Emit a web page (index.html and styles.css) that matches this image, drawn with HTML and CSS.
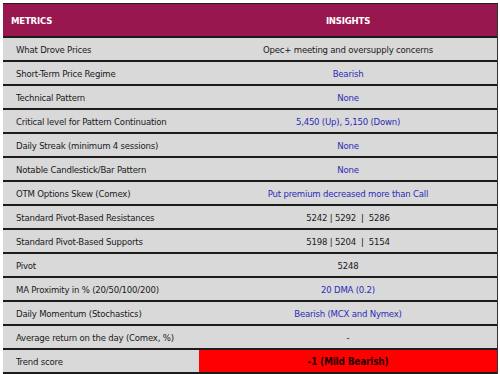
FILE: index.html
```html
<!DOCTYPE html>
<html>
<head>
<meta charset="utf-8">
<link rel="stylesheet" href="styles.css">
</head>
<body>
<div class="sheet">
  <div class="row head">
    <div class="c1">METRICS</div>
    <div class="c2">INSIGHTS</div>
  </div>
  <div class="row"><div class="c1">What Drove Prices</div><div class="c2">Opec+ meeting and oversupply concerns</div></div>
  <div class="row"><div class="c1">Short-Term Price Regime</div><div class="c2 blue">Bearish</div></div>
  <div class="row"><div class="c1">Technical Pattern</div><div class="c2 blue">None</div></div>
  <div class="row"><div class="c1">Critical level for Pattern Continuation</div><div class="c2 blue">5,450 (Up), 5,150 (Down)</div></div>
  <div class="row"><div class="c1">Daily Streak (minimum 4 sessions)</div><div class="c2 blue">None</div></div>
  <div class="row"><div class="c1">Notable Candlestick/Bar Pattern</div><div class="c2 blue">None</div></div>
  <div class="row"><div class="c1">OTM Options Skew (Comex)</div><div class="c2 blue">Put premium decreased more than Call</div></div>
  <div class="row"><div class="c1">Standard Pivot-Based Resistances</div><div class="c2">5242 | 5292 &nbsp;| &nbsp;5286</div></div>
  <div class="row"><div class="c1">Standard Pivot-Based Supports</div><div class="c2">5198 | 5204 &nbsp;| &nbsp;5154</div></div>
  <div class="row"><div class="c1">Pivot</div><div class="c2">5248</div></div>
  <div class="row"><div class="c1">MA Proximity in % (20/50/100/200)</div><div class="c2 blue">20 DMA (0.2)</div></div>
  <div class="row"><div class="c1">Daily Momentum (Stochastics)</div><div class="c2 blue">Bearish (MCX and Nymex)</div></div>
  <div class="row"><div class="c1">Average return on the day (Comex, %)</div><div class="c2">-</div></div>
  <div class="row last"><div class="c1">Trend score</div><div class="c2 score">-1 (Mild Bearish)</div></div>
</div>
</body>
</html>
```
FILE: styles.css
```css
html, body {
  margin: 0;
  padding: 0;
  background: #ffffff;
}
body {
  padding: 3px 3px 0 3px;
  font-family: "DejaVu Sans Condensed", "DejaVu Sans", sans-serif;
  font-size: 9.5px;
  letter-spacing: -0.2px;
  color: #1a1a1a;
}
.sheet {
  width: 494px;
  border-top: 1px solid #2a1a1f;
  border-right: 1px solid #333;
  background: #d9d9d9;
}
.row {
  display: grid;
  grid-template-columns: 196px 1fr;
  height: 22px;
  border-bottom: 2px solid #1c1c1c;
  align-items: stretch;
}
.row > div {
  display: flex;
  align-items: center;
}
.c1 {
  padding-left: 13px;
}
.c2 {
  justify-content: center;
}
.head {
  height: 32px;
  background: #99174f;
  color: #ffffff;
  font-weight: bold;
  font-size: 9.5px;
}
.head .c1 {
  padding-left: 8px;
}
.blue {
  color: #2b2bb8;
}
.score {
  background: #ff0000;
  color: #2a0000;
  font-weight: bold;
  font-size: 10px;
}
```
